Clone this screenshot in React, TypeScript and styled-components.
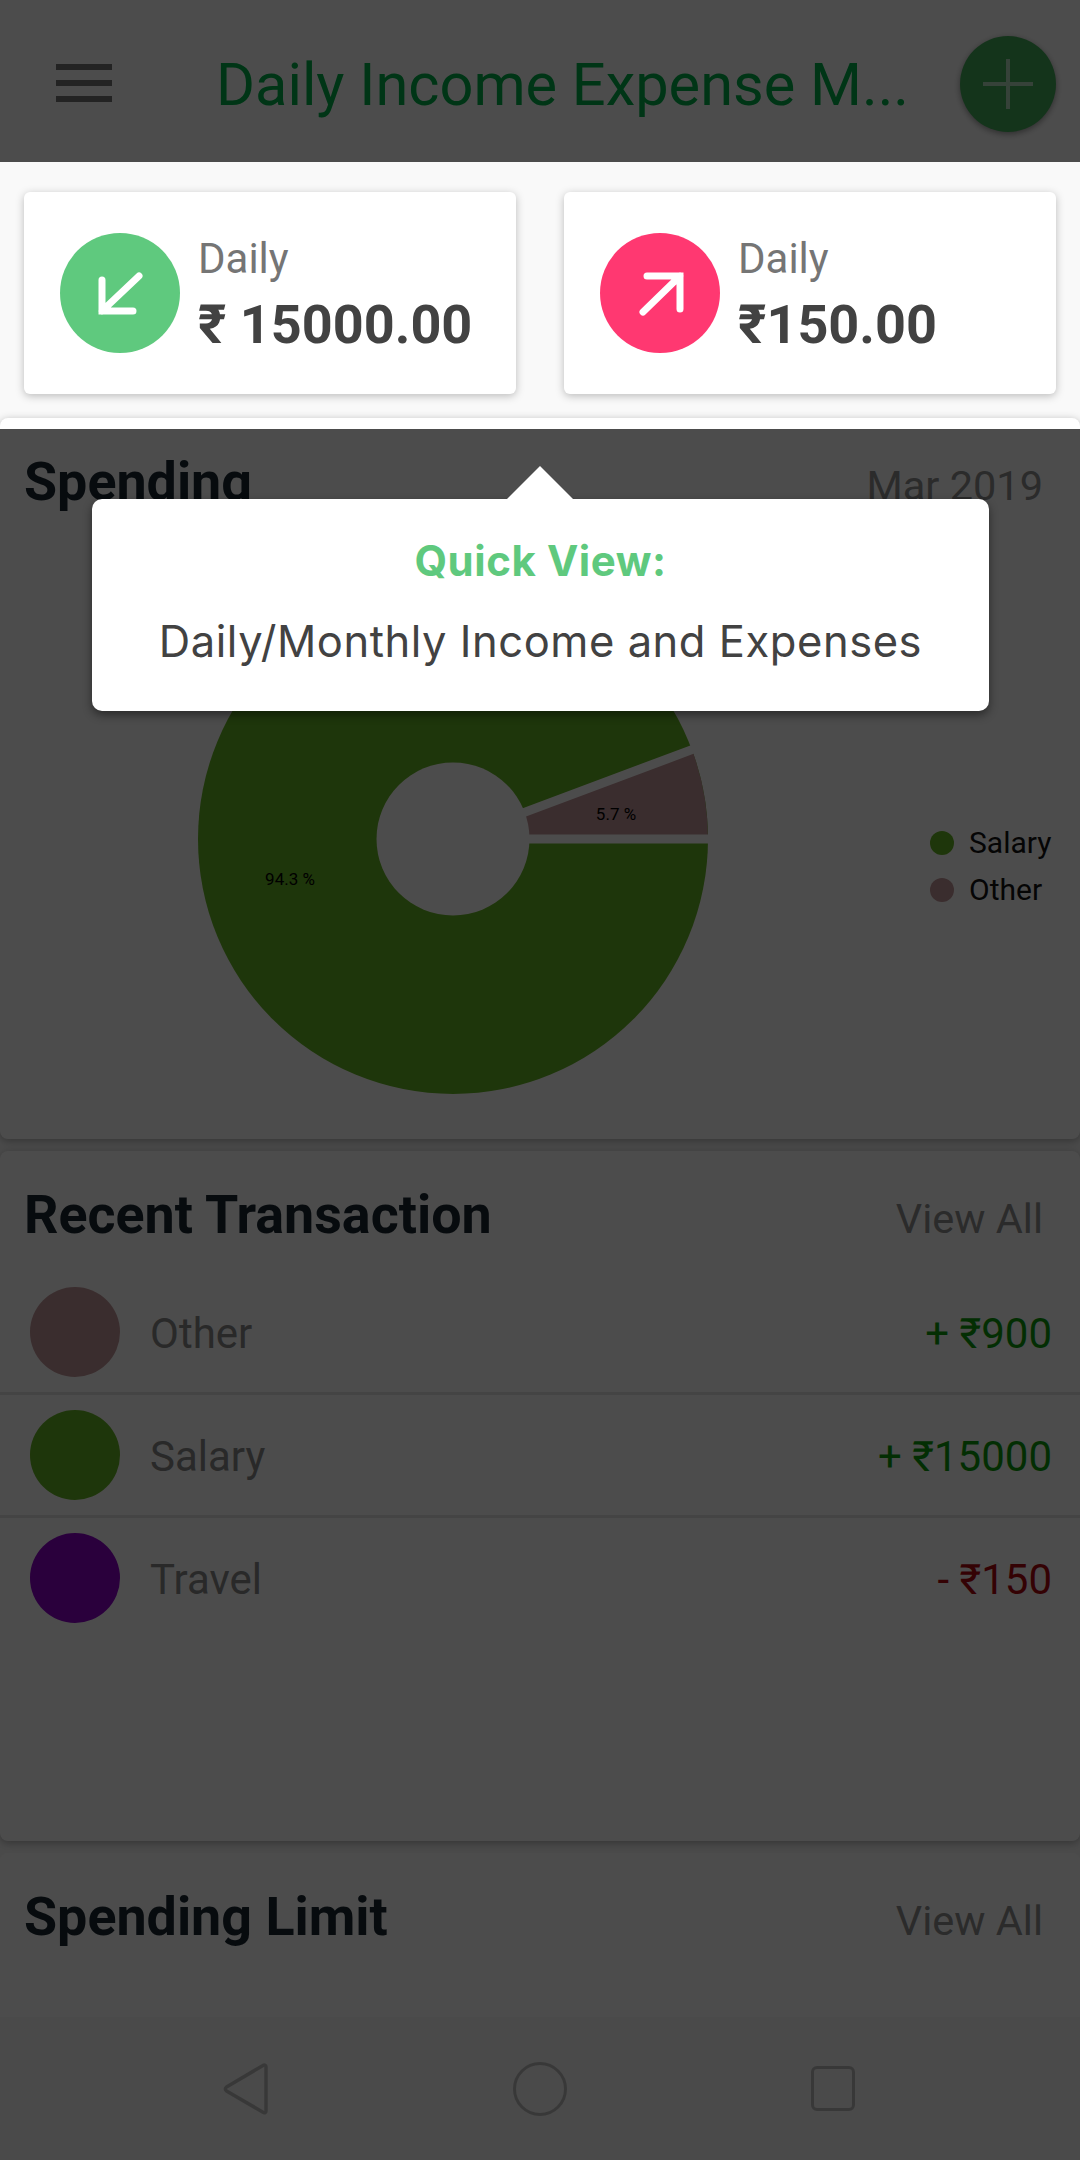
import React from 'react';
import styled, { createGlobalStyle } from 'styled-components';

const GlobalStyle = createGlobalStyle`
  html, body {
    margin: 0;
    padding: 0;
    background: #fff;
  }
  * {
    box-sizing: border-box;
  }
`;

const transactions = [
  { name: 'Other', color: '#c3979a', amount: '+ ₹900', tone: '#0a9c0a' },
  { name: 'Salary', color: '#67b425', amount: '+ ₹15000', tone: '#0a9c0a' },
  { name: 'Travel', color: '#8c00c8', amount: '- ₹150', tone: '#b00810' },
];

const App = () => {
  return (
    <>
      <GlobalStyle />
      <Page>
        <Header>
          <Burger>
            <span />
            <span />
            <span />
          </Burger>
          <Title>Daily Income Expense M...</Title>
          <AddButton>
            <svg width="54" height="54" viewBox="0 0 54 54">
              <path d="M27 2V52M2 27H52" stroke="#fff" strokeWidth="4" opacity="0.6" />
            </svg>
          </AddButton>
        </Header>

        <Stats>
          <StatCard>
            <StatIcon $bg="#5fc97e">
              <svg width="120" height="120" viewBox="0 0 120 120" fill="none">
                <path d="M42 47V78H73M42 78L79 43" stroke="#fff" strokeWidth="7" strokeLinecap="round" strokeLinejoin="miter" />
              </svg>
            </StatIcon>
            <div>
              <StatLabel>Daily</StatLabel>
              <StatValue>₹ 15000.00</StatValue>
            </div>
          </StatCard>
          <StatCard>
            <StatIcon $bg="#ff3871">
              <svg width="120" height="120" viewBox="0 0 120 120" fill="none">
                <path d="M47 43H80V76M80 43L43 79" stroke="#fff" strokeWidth="7" strokeLinecap="round" strokeLinejoin="miter" />
              </svg>
            </StatIcon>
            <div>
              <StatLabel>Daily</StatLabel>
              <StatValue>₹150.00</StatValue>
            </div>
          </StatCard>
        </Stats>

        <Panel $height={721}>
          <PanelHead>
            <PanelTitle>Spending</PanelTitle>
            <PanelLink>Mar 2019</PanelLink>
          </PanelHead>
          <ChartRow>
            <svg width="510" height="510" viewBox="0 0 510 510">
              <circle cx="255" cy="255" r="255" fill="#67b425" />
              <path d="M255 255L510 255A255 255 0 0 0 493.9 165.6Z" fill="#c3979a" />
              <path d="M255 255L515 255M255 255L498.6 163.9" stroke="#fff" strokeWidth="9" />
              <circle cx="255" cy="255" r="76.5" fill="#fff" />
              <PieLabel x="92" y="301" textAnchor="middle">94.3 %</PieLabel>
              <PieLabel x="418" y="236" textAnchor="middle">5.7 %</PieLabel>
            </svg>
            <Legend>
              <LegendItem>
                <LegendDot $bg="#67b425" />
                Salary
              </LegendItem>
              <LegendItem>
                <LegendDot $bg="#c3979a" />
                Other
              </LegendItem>
            </Legend>
          </ChartRow>
        </Panel>

        <Panel $height={690}>
          <PanelHead>
            <PanelTitle>Recent Transaction</PanelTitle>
            <PanelLink>View All</PanelLink>
          </PanelHead>
          {transactions.map(t => (
            <TransactionRow key={t.name}>
              <TransactionDot $bg={t.color} />
              <TransactionName>{t.name}</TransactionName>
              <TransactionAmount $tone={t.tone}>{t.amount}</TransactionAmount>
            </TransactionRow>
          ))}
        </Panel>

        <LastPanel>
          <PanelHead>
            <PanelTitle>Spending Limit</PanelTitle>
            <PanelLink>View All</PanelLink>
          </PanelHead>
        </LastPanel>

        <NavBar>
          <svg width="46" height="54" viewBox="0 0 46 54" fill="none">
            <path d="M40 3.5C41.5 2.5 43 3.5 43 5V49C43 50.5 41.5 51.5 40 50.2L3.5 29C2 27.8 2 26.2 3.5 25Z" stroke="#bdbdbd" strokeWidth="3.5" strokeLinejoin="round" />
          </svg>
          <HomeKey />
          <RecentKey />
        </NavBar>

        <ScrimTop />
        <ScrimBottom />

        <Tip>
          <TipArrow />
          <TipTitle>Quick View:</TipTitle>
          <TipText>Daily/Monthly Income and Expenses</TipText>
        </Tip>
      </Page>
    </>
  );
};

const Page = styled.div`
  position: relative;
  width: 1080px;
  height: 2160px;
  overflow: hidden;
  display: flex;
  flex-direction: column;
  background: #f9f9f9;
  font-family: Roboto, "Liberation Sans", sans-serif;
`;

const Header = styled.header`
  height: 162px;
  flex: none;
  background: #fff;
  display: flex;
  align-items: center;
  padding: 0 24px 0 56px;
`;

const Burger = styled.div`
  width: 56px;
  height: 38px;
  display: flex;
  flex-direction: column;
  justify-content: space-between;
  margin-top: 4px;
  span {
    display: block;
    height: 6px;
    background: #757575;
  }
`;

const Title = styled.h1`
  margin: 8px 0 0 104px;
  font-size: 59.5px;
  font-weight: 400;
  color: #00b34a;
  white-space: nowrap;
`;

const AddButton = styled.div`
  width: 96px;
  height: 96px;
  margin: 6px 0 0 auto;
  border-radius: 50%;
  background: #45ad5c;
  box-shadow: 0 2px 6px rgba(0, 0, 0, 0.4);
  display: flex;
  align-items: center;
  justify-content: center;
`;

const Stats = styled.section`
  flex: none;
  display: flex;
  gap: 48px;
  padding: 30px 24px 24px;
`;

const StatCard = styled.div`
  flex: 1;
  height: 202px;
  background: #fff;
  border-radius: 6px;
  box-shadow: 0 2px 8px rgba(0, 0, 0, 0.25);
  display: flex;
  align-items: center;
  padding: 0 36px;
  gap: 18px;
`;

const StatIcon = styled.div<{ $bg: string }>`
  width: 120px;
  height: 120px;
  flex: none;
  border-radius: 50%;
  background: ${p => p.$bg};
`;

const StatLabel = styled.div`
  font-size: 42px;
  line-height: 50px;
  margin-top: 5px;
  color: #757575;
`;

const StatValue = styled.div`
  font-size: 54px;
  line-height: 64px;
  margin-top: 9px;
  font-weight: 700;
  color: #424242;
`;

const Panel = styled.section<{ $height: number }>`
  flex: none;
  height: ${p => p.$height}px;
  margin-bottom: 12px;
  background: #fff;
  border-radius: 8px;
  box-shadow: 0 2px 8px rgba(0, 0, 0, 0.3);
`;

const LastPanel = styled.section`
  flex: 1;
  background: #fff;
  border-radius: 8px 8px 0 0;
`;

const PanelHead = styled.div`
  height: 121px;
  display: flex;
  justify-content: space-between;
  align-items: baseline;
  padding: 34px 37px 0 24px;
`;

const PanelTitle = styled.h2`
  margin: 0;
  font-size: 53.8px;
  line-height: 60px;
  font-weight: 700;
  color: #1a2630;
`;

const PanelLink = styled.span`
  font-size: 41.5px;
  color: #8f8f8f;
`;

const ChartRow = styled.div`
  display: flex;
  align-items: flex-start;
  padding: 45px 0 0 198px;
`;

const PieLabel = styled.text`
  font-family: Roboto, "Liberation Sans", sans-serif;
  font-size: 17px;
  fill: #000;
`;

const Legend = styled.div`
  display: flex;
  flex-direction: column;
  gap: 12px;
  margin: 241px 0 0 222px;
`;

const LegendItem = styled.div`
  display: flex;
  align-items: center;
  gap: 15px;
  font-size: 30px;
  line-height: 35px;
  color: #111;
`;

const LegendDot = styled.span<{ $bg: string }>`
  width: 24px;
  height: 24px;
  border-radius: 50%;
  background: ${p => p.$bg};
`;

const TransactionRow = styled.div`
  display: flex;
  align-items: center;
  padding: 15px 28px 15px 30px;
  & + & {
    border-top: 3px solid #e4e4e4;
  }
`;

const TransactionDot = styled.span<{ $bg: string }>`
  width: 90px;
  height: 90px;
  flex: none;
  border-radius: 50%;
  background: ${p => p.$bg};
`;

const TransactionName = styled.span`
  margin: 2px 0 0 30px;
  font-size: 42px;
  color: #8a8a8a;
`;

const TransactionAmount = styled.span<{ $tone: string }>`
  margin: 2px 0 0 auto;
  font-size: 42px;
  color: ${p => p.$tone};
`;

const NavBar = styled.nav`
  flex: none;
  height: 143px;
  background: #f7f7f7;
  display: flex;
  align-items: center;
  padding: 0 225px 0 223px;
  justify-content: space-between;
  svg {
    display: block;
  }
`;

const HomeKey = styled.span`
  width: 54px;
  height: 54px;
  border: 3.5px solid #bdbdbd;
  border-radius: 50%;
`;

const RecentKey = styled.span`
  width: 44px;
  height: 45px;
  border: 3.5px solid #bdbdbd;
  border-radius: 6px;
`;

const ScrimTop = styled.div`
  position: absolute;
  left: 0;
  right: 0;
  top: 0;
  height: 162px;
  background: rgba(0, 0, 0, 0.7);
`;

const ScrimBottom = styled.div`
  position: absolute;
  left: 0;
  right: 0;
  top: 429px;
  bottom: 0;
  background: rgba(0, 0, 0, 0.7);
`;

const Tip = styled.div`
  position: absolute;
  left: 92px;
  top: 499px;
  width: 897px;
  height: 212px;
  background: #fff;
  border-radius: 10px;
  box-shadow: 0 4px 10px rgba(0, 0, 0, 0.45);
  display: flex;
  flex-direction: column;
  align-items: center;
  font-family: Inter, "Open Sans", sans-serif;
  padding-top: 37px;
`;

const TipArrow = styled.span`
  position: absolute;
  top: -33px;
  left: 415px;
  width: 0;
  height: 0;
  border-left: 33px solid transparent;
  border-right: 33px solid transparent;
  border-bottom: 33px solid #fff;
`;

const TipTitle = styled.div`
  font-size: 42px;
  line-height: 50px;
  letter-spacing: 0.55px;
  font-weight: 700;
  color: #5fc97e;
`;

const TipText = styled.div`
  margin-top: 30px;
  font-size: 43.5px;
  line-height: 50px;
  letter-spacing: 0.55px;
  color: #424242;
`;

export default App;
